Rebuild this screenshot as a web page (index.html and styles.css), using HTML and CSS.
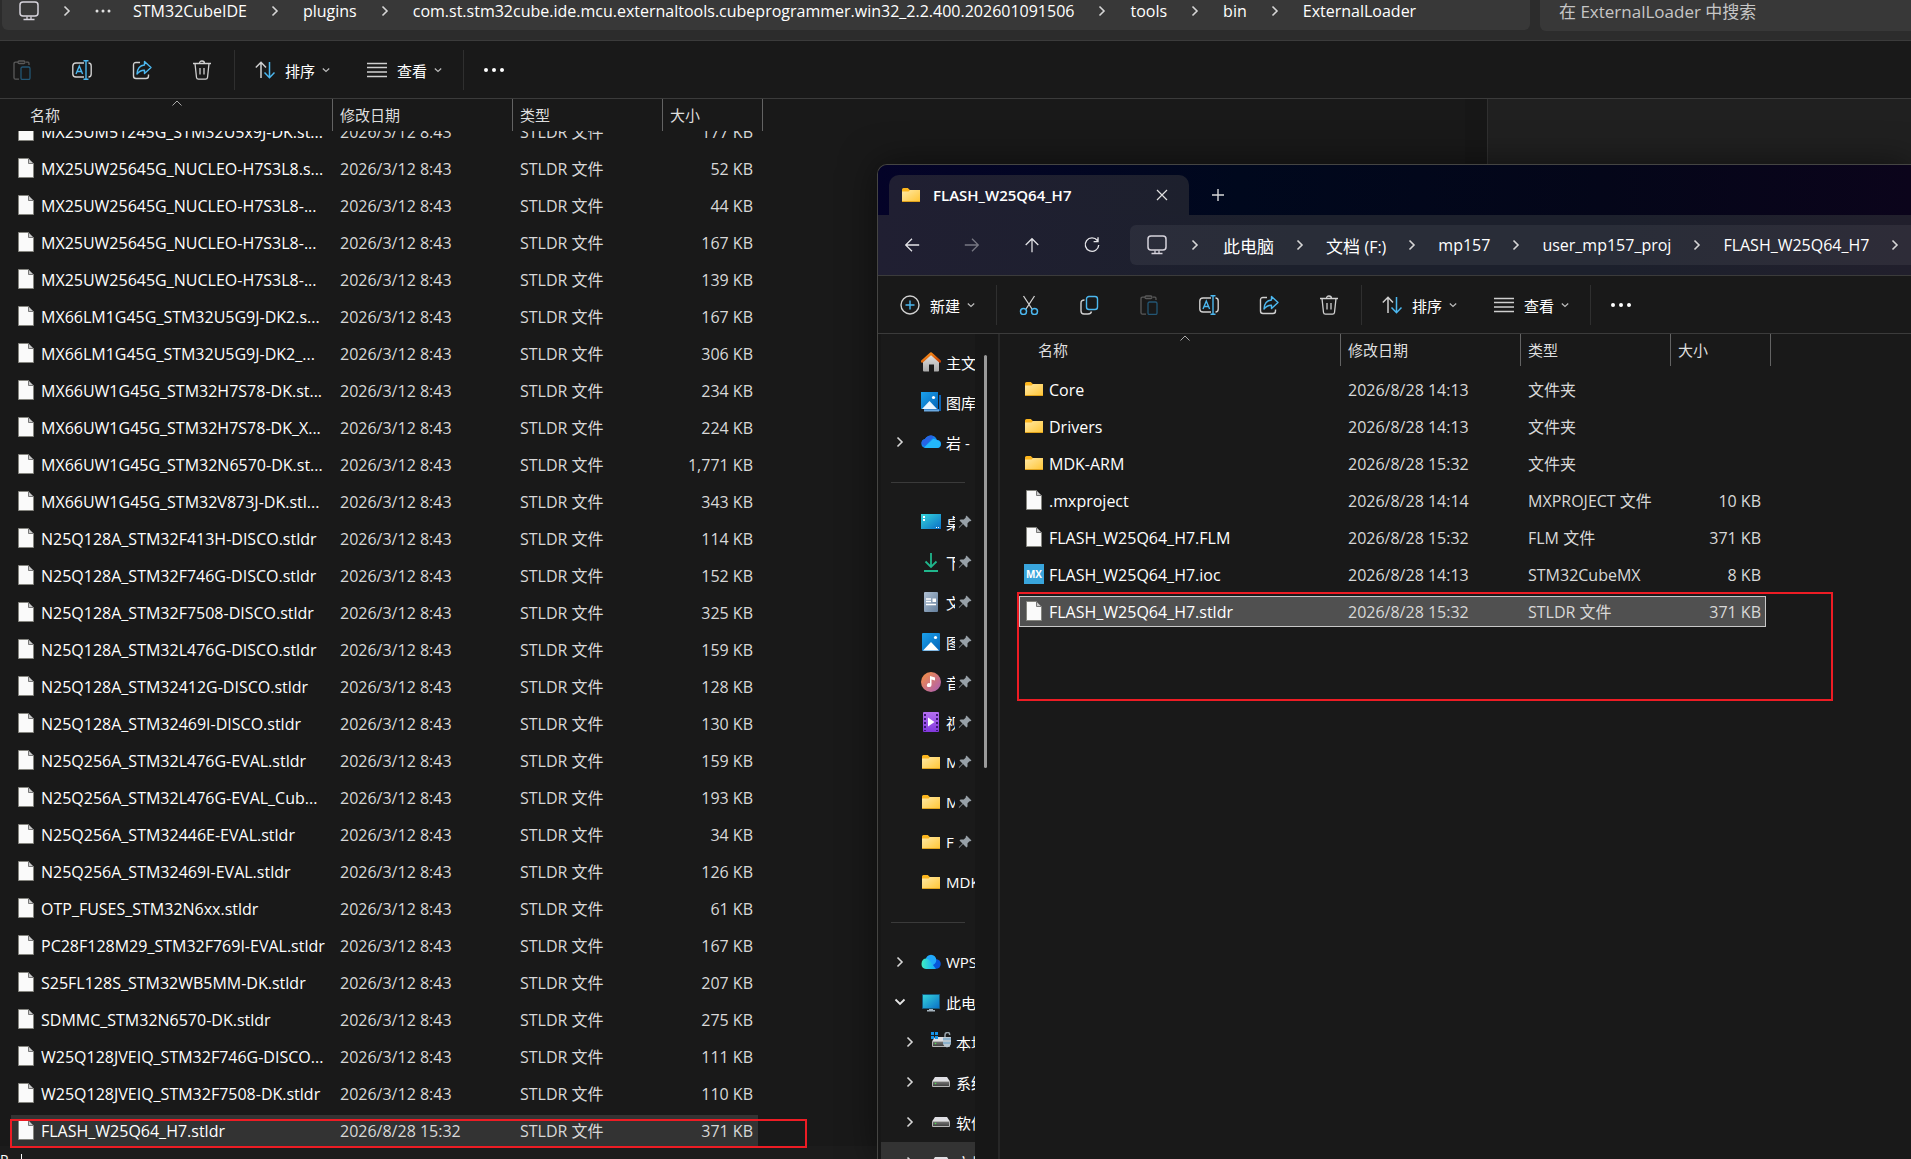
FILE: index.html
```html
<!DOCTYPE html>
<html lang="zh-CN">
<head>
    <meta charset="UTF-8">
    <meta name="viewport" content="width=device-width, initial-scale=1.0">
    <title>ExternalLoader</title>
    <link rel="stylesheet" href="styles.css">
</head>
<body>

<!-- Icon set -->
<svg class="sprite" aria-hidden="true">
    <defs>
        <linearGradient id="gFolder" x1="0" y1="0" x2="1" y2="1"><stop offset="0" stop-color="#ffe9a6"/><stop offset="1" stop-color="#ffc534"/></linearGradient>
        <linearGradient id="gBlue" x1="0" y1="0" x2="1" y2="1"><stop offset="0" stop-color="#1ba0ea"/><stop offset="1" stop-color="#0564b8"/></linearGradient>
        <linearGradient id="gTeal" x1="0" y1="0" x2="1" y2="1"><stop offset="0" stop-color="#36d6dc"/><stop offset="1" stop-color="#0a6ec6"/></linearGradient>
        <linearGradient id="gHouse" x1="0" y1="0" x2="0" y2="1"><stop offset="0" stop-color="#e4e4e4"/><stop offset="1" stop-color="#a9a9a9"/></linearGradient>
        <linearGradient id="gRoof" x1="0" y1="0" x2="1" y2="1"><stop offset="0" stop-color="#ff9a1f"/><stop offset="1" stop-color="#c63e00"/></linearGradient>
        <linearGradient id="gDoc" x1="0" y1="0" x2="1" y2="1"><stop offset="0" stop-color="#aebfd2"/><stop offset="1" stop-color="#637e9c"/></linearGradient>
        <linearGradient id="gMusic" x1="0" y1="0" x2="1" y2="1"><stop offset="0" stop-color="#f9923d"/><stop offset="1" stop-color="#a85bb9"/></linearGradient>
        <linearGradient id="gVideo" x1="0" y1="0" x2="0" y2="1"><stop offset="0" stop-color="#b56ff0"/><stop offset="1" stop-color="#8238dd"/></linearGradient>
        <linearGradient id="gWps" x1="0" y1="0" x2="1" y2="0"><stop offset="0" stop-color="#3ff0c0"/><stop offset="1" stop-color="#12a4ff"/></linearGradient>
        <linearGradient id="gDrive" x1="0" y1="0" x2="0" y2="1"><stop offset="0" stop-color="#777"/><stop offset="1" stop-color="#3b3b3b"/></linearGradient>
    </defs>
    <symbol id="file" viewBox="0 0 20 20"><path d="M2.500.5h10l5 5v14h-15z" fill="#fafafa" stroke="#85857f"/><path d="M12.500.5v5h5z" fill="#c9c9c9" stroke="#777"/></symbol>
    <symbol id="folder" viewBox="0 0 20 20"><path d="M1 4.500q0-1.500 1.500-1.500h4.300l2 2H19v4H1z" fill="#fcb51c"/><path d="M1 6.500h6.500L9 5h10v12H1z" fill="url(#gFolder)"/><path d="M1 16.500h18" stroke="#e0a21c"/></symbol>
    <symbol id="mx" viewBox="0 0 20 20"><path d="M0 0h20v20H0z" fill="#39a5dc"/><text x="10" y="14" text-anchor="middle" class="mx-text">MX</text></symbol>
    <symbol id="home" viewBox="0 0 20 20"><path d="M2 9l8-7 8 7v9.500q0 1-1 1h-4v-7H8v7H3q-1 0-1-1z" fill="url(#gHouse)"/><path d="M1 9.500L10 1.500l9 8" fill="none" stroke="url(#gRoof)" stroke-width="2.400" stroke-linecap="round" stroke-linejoin="round"/></symbol>
    <symbol id="gallery" viewBox="0 0 20 20"><path d="M3 17h15V3h2v16H3z" fill="#0f63b4"/><path d="M3 17.500h15v2H3z" fill="#6aa9e0"/><path d="M0 0h17v17H0z" fill="url(#gBlue)"/><path d="M1 17l7.500-8 7.500 8z" fill="#e9f5ff"/><circle cx="12.500" cy="5.500" r="1.600" fill="#fff"/></symbol>
    <symbol id="picture" viewBox="0 0 20 20"><rect x="1" y="1" width="18" height="18" rx="1" fill="url(#gBlue)"/><path d="M2 18.500l8-8.500 8 8.500z" fill="#fff"/><circle cx="14.500" cy="5.500" r="1.600" fill="#fff"/></symbol>
    <symbol id="onedrive" viewBox="0 0 20 20"><path d="M4.500 16A4.500 4.500 0 0 1 4 7.100 6.500 6.500 0 0 1 16 8a4 4 0 0 1 0 8z" fill="#1482ee"/><path d="M3 15.500L12 7a6 6 0 0 1 4 1q4 1 3.800 4.500Q19 16 16 16H5z" fill="#23b8fb"/><path d="M4 7.100A6.500 6.500 0 0 1 13 4.500L4 14q-3-1-3.500-3 .5-3 3.500-3.900z" fill="#2763e4"/></symbol>
    <symbol id="wps" viewBox="0 0 20 20"><circle cx="15" cy="12" r="4.800" fill="#0754da"/><circle cx="10" cy="8" r="5.300" fill="#21a9fb"/><path d="M4.500 6.500q3 0 5 3 2 3 5.500 7.500H5q-4.500-.5-4.500-5 .3-5 4-5.500z" fill="url(#gWps)"/></symbol>
    <symbol id="desktop" viewBox="0 0 20 20"><path d="M0 2h20v15H0z" fill="url(#gTeal)"/><path d="M2 4h2v2H2zM2 7h2v2H2z" fill="#fff"/><path d="M15 15.500h3" stroke="#fff" stroke-dasharray="1 1"/></symbol>
    <symbol id="download" viewBox="0 0 20 20"><path d="M10 1v14M4.500 9.500L10 15l5.500-5.500M3 19h14" fill="none" stroke="#20b68c" stroke-width="1.800"/></symbol>
    <symbol id="document" viewBox="0 0 20 20"><rect x="3" y="0" width="14" height="20" rx="1" fill="url(#gDoc)"/><path d="M5 7h5M5 9.500h5M5 12.500h10" stroke="#fff" stroke-width="1.300"/><path d="M11.500 6.500h3.500V10h-3.500z" fill="#fff"/></symbol>
    <symbol id="music" viewBox="0 0 20 20"><circle cx="10" cy="10" r="10" fill="url(#gMusic)"/><path d="M9 4l5 1.500v3L10.500 7.500V13a2.300 2 0 1 1-1.500-1.800z" fill="#fff"/></symbol>
    <symbol id="video" viewBox="0 0 20 20"><rect x="2" y="0" width="16" height="20" rx="1" fill="url(#gVideo)"/><path d="M4 2v17M16 2v17" stroke="#3d1576" stroke-width="2" stroke-dasharray="2 2"/><path d="M7 5.500l6.500 4.500L7 14.500z" fill="#fff"/></symbol>
    <symbol id="pc" viewBox="0 0 20 20"><path d="M1.500 2.500h17v14h-17z" fill="url(#gTeal)" stroke="#15587c"/><path d="M8 17h4v1h2v1.500H6V18h2z" fill="#a6b4be"/></symbol>
    <symbol id="drive" viewBox="0 0 20 20"><path d="M4 5h12l3 4.500H1z" fill="#dfdfe3"/><path d="M1.500 9.500h17v5h-17z" fill="url(#gDrive)" stroke="#b5b5b5"/><circle cx="4.500" cy="11.500" r=".8" fill="#4be04b"/></symbol>
    <symbol id="osdrive" viewBox="0 0 20 20"><path d="M4 5h12l3 4.500H1z" fill="#dfdfe3"/><path d="M1.500 9.500h17v5h-17z" fill="url(#gDrive)" stroke="#b5b5b5"/><circle cx="4.500" cy="11.500" r=".8" fill="#4be04b"/><path d="M0 0h3v3H0zM4 0h3v3H4zM0 4h3v3H0zM4 4h3v3H4z" fill="#1594e8"/><path d="M14 5V3q0-2.500 2.500-2.500t2 2.500" fill="none" stroke="#98a3aa" stroke-width="1.500"/><path d="M12 5h8v7q-1 3-4 3.500-3-.5-4-3.500z" fill="#b9c7d1"/><path d="M12 7h8M12 11h8" stroke="#5e9cc7"/></symbol>
    <symbol id="pin" viewBox="0 0 14 14"><path d="M8.500.5l5 5-1.200.8-.8-.1-2 2v3.300l-1 1L5 9 .8 13.200 1 12l3.500-3.500L1.500 5.500l1-1h3.300l2-2-.1-.8z" fill="#98a1a8"/></symbol>
    <symbol id="monitor" viewBox="0 0 20 20"><rect x="1" y="1" width="18" height="14" rx="3" fill="none" stroke="#d6d3dc" stroke-width="1.500"/><path d="M8 15.500v3M12 15.500v3M4.500 18.500h11" stroke="#d6d3dc" stroke-width="1.300"/></symbol>
    <symbol id="right" viewBox="0 0 10 12"><path d="M2.500 1.500L7 6l-4.500 4.500" fill="none" stroke="#d6d6d6" stroke-width="1.600"/></symbol>
    <symbol id="down" viewBox="0 0 12 10"><path d="M1.500 2.500L6 7l4.500-4.500" fill="none" stroke="#e6e6e6" stroke-width="1.800"/></symbol>
    <symbol id="caret" viewBox="0 0 10 10"><path d="M1.800 3.500L5 6.500l3.200-3" fill="none" stroke="#bdbdbd" stroke-width="1.200"/></symbol>
    <symbol id="up-mark" viewBox="0 0 10 6"><path d="M.5 5.500L5 1l4.500 4.500" fill="none" stroke="#aaa"/></symbol>
    <symbol id="dots" viewBox="0 0 20 20"><path d="M2 10h.01M10 10h.01M18 10h.01" stroke="#fff" stroke-width="4" stroke-linecap="round"/></symbol>
    <symbol id="dots-small" viewBox="0 0 16 16"><path d="M2 8h.01M8 8h.01M14 8h.01" stroke="#e0e0e0" stroke-width="3" stroke-linecap="round"/></symbol>
    <symbol id="paste" viewBox="0 0 20 20"><g fill="none" stroke-width="1.300"><path d="M6 2.200H3.500q-1.500 0-1.500 1.500v14q0 1.500 1.500 1.500H7M14 2.200h2q1 0 1 1.500V5" stroke="#5a5a5a"/><rect x="6" y="1" width="7" height="2.500" rx="1.200" stroke="#5a5a5a"/><rect x="9" y="7" width="9" height="12.500" rx="1.500" stroke="#235674"/></g></symbol>
    <symbol id="rename" viewBox="0 0 20 20"><g fill="none" stroke-width="1.400"><path d="M12 3H4Q.8 3 .8 6v8Q.8 17 4 17h8M16.500 3q2.700 0 2.700 3v8q0 3-2.700 3" stroke="#d0d0d0"/><path d="M4 14L7.300 6l3.300 8M5.200 11.500h4.200M14 .7v18.600M11.500.7h5M11.500 19.300h5" stroke="#4cb8f0"/></g></symbol>
    <symbol id="share" viewBox="0 0 20 20"><g fill="none" stroke-width="1.400" stroke-linejoin="round"><path d="M8 2.500H4Q1.500 2.500 1.500 5v11Q1.500 18.500 4 18.500h10q2.500 0 2.500-2.500v-1.500" stroke="#d0d0d0"/><path d="M12.500 1.500L19 7.500l-6.500 6v-3.300Q8 10 5 14q.5-8.500 7.500-9z" stroke="#4cb8f0"/></g></symbol>
    <symbol id="trash" viewBox="0 0 20 20"><path d="M1 3.500h18M7.500 3.500q0-2.500 2.500-2.500t2.500 2.500M3 3.500l1.500 14q.2 1.700 2 1.700h7q1.800 0 2-1.700L17 3.500M8 8v6.500M12 8v6.500" fill="none" stroke="#d0d0d0" stroke-width="1.300"/></symbol>
    <symbol id="cut" viewBox="0 0 20 20"><path d="M4.500 1L13 14M15.500 1L7 14" fill="none" stroke="#d0d0d0" stroke-width="1.300"/><g fill="none" stroke="#4cb8f0" stroke-width="1.500"><circle cx="4.500" cy="16.500" r="3"/><circle cx="15.500" cy="16.500" r="3"/></g></symbol>
    <symbol id="copy" viewBox="0 0 20 20"><g fill="none" stroke-width="1.400"><path d="M5.500 5Q2 5 2 8v8q0 3 3 3h4q3 0 3.500-2.500" stroke="#d0d0d0"/><rect x="7.500" y="1.500" width="11" height="13" rx="2.500" stroke="#4cb8f0"/></g></symbol>
    <symbol id="sort" viewBox="0 0 20 20"><g fill="none" stroke-width="1.500"><path d="M6 18V2.500M.8 7.500L6 2.300l5 5.200" stroke="#d0d0d0"/><path d="M14.500 2v15.500M9.500 12.500l5 5.200 5-5.200" stroke="#4cb8f0"/></g></symbol>
    <symbol id="view" viewBox="0 0 20 20"><path d="M0 3.500h20M0 7.500h20M0 12h20M0 16.500h20" stroke="#cfcfcf" stroke-width="1.300"/></symbol>
    <symbol id="new" viewBox="0 0 20 20"><circle cx="10" cy="10" r="9" fill="none" stroke="#d0d0d0" stroke-width="1.400"/><path d="M10 5.500v9M5.500 10h9" stroke="#4cb8f0" stroke-width="1.400"/></symbol>
    <symbol id="arrow" viewBox="0 0 20 20"><path d="M18 10H3M10 3l-7 7 7 7" fill="none" stroke="#e4e4e8" stroke-width="1.400"/></symbol>
    <symbol id="refresh" viewBox="0 0 20 20"><path d="M16 5a7.500 7.500 0 1 0 1.500 5M16.700 1.500v4.800h-4.900" fill="none" stroke="#e4e4e8" stroke-width="1.500"/></symbol>
    <symbol id="close" viewBox="0 0 12 12"><path d="M1 1l10 10M11 1L1 11" stroke="#e0e0e0" stroke-width="1.200"/></symbol>
    <symbol id="plus" viewBox="0 0 12 12"><path d="M6 0v12M0 6h12" stroke="#d8d8d8" stroke-width="1.400"/></symbol>
</svg>

<!-- Back window: ExternalLoader -->
<main class="window back">
    <div class="nav">
        <nav class="address">
            <svg class="i20"><use href="#monitor"/></svg>
            <svg class="sep"><use href="#right"/></svg>
            <svg class="i16"><use href="#dots-small"/></svg>
            <a href="#" class="after-dots">STM32CubeIDE</a>
            <svg class="sep"><use href="#right"/></svg>
            <a href="#">plugins</a>
            <svg class="sep"><use href="#right"/></svg>
            <a href="#">com.st.stm32cube.ide.mcu.externaltools.cubeprogrammer.win32_2.2.400.202601091506</a>
            <svg class="sep"><use href="#right"/></svg>
            <a href="#">tools</a>
            <svg class="sep"><use href="#right"/></svg>
            <a href="#">bin</a>
            <svg class="sep"><use href="#right"/></svg>
            <a href="#">ExternalLoader</a>
        </nav>
        <input class="search" type="text" aria-label="搜索" placeholder="在 ExternalLoader 中搜索">
    </div>
    <div class="toolbar">
        <div class="tools">
            <button aria-label="粘贴"><svg class="i20"><use href="#paste"/></svg></button>
            <button aria-label="重命名"><svg class="i20"><use href="#rename"/></svg></button>
            <button aria-label="共享"><svg class="i20"><use href="#share"/></svg></button>
            <button aria-label="删除"><svg class="i20"><use href="#trash"/></svg></button>
        </div>
        <div class="menus">
            <button><svg class="i20"><use href="#sort"/></svg>排序<svg class="i10"><use href="#caret"/></svg></button>
            <button><svg class="i20"><use href="#view"/></svg>查看<svg class="i10"><use href="#caret"/></svg></button>
        </div>
        <div class="menus">
            <button aria-label="更多"><svg class="i20"><use href="#dots"/></svg></button>
        </div>
    </div>
    <div class="content">
        <section class="list">
            <div class="heads">
                <button class="c-name">名称<svg class="mark"><use href="#up-mark"/></svg></button>
                <button class="c-date">修改日期</button>
                <button class="c-type">类型</button>
                <button class="c-size">大小</button>
            </div>
            <div class="rows">
                <table><tbody id="loaderFiles"></tbody></table>
            </div>
        </section>
        <div class="gutter"></div>
        <aside class="preview"></aside>
    </div>
    <div class="status"><span>P</span><i></i></div>
    <div class="marker marker-back"></div>
</main>

<!-- Front window: FLASH_W25Q64_H7 -->
<div class="window front">
    <div class="tabs">
        <div class="tab">
            <svg class="i20"><use href="#folder"/></svg>
            <span>FLASH_W25Q64_H7</span>
            <button aria-label="关闭"><svg class="i12"><use href="#close"/></svg></button>
        </div>
        <button class="add" aria-label="新标签页"><svg class="i12"><use href="#plus"/></svg></button>
    </div>
    <div class="nav">
        <div class="tools">
            <button aria-label="后退"><svg class="i18"><use href="#arrow"/></svg></button>
            <button aria-label="前进" class="forward"><svg class="i18"><use href="#arrow"/></svg></button>
            <button aria-label="向上" class="up"><svg class="i18"><use href="#arrow"/></svg></button>
            <button aria-label="刷新"><svg class="i18"><use href="#refresh"/></svg></button>
        </div>
        <nav class="address">
            <svg class="i20"><use href="#monitor"/></svg>
            <svg class="sep"><use href="#right"/></svg>
            <a href="#" class="cjk">此电脑</a>
            <svg class="sep"><use href="#right"/></svg>
            <a href="#" class="cjk">文档 <small>(F:)</small></a>
            <svg class="sep"><use href="#right"/></svg>
            <a href="#">mp157</a>
            <svg class="sep"><use href="#right"/></svg>
            <a href="#">user_mp157_proj</a>
            <svg class="sep"><use href="#right"/></svg>
            <a href="#">FLASH_W25Q64_H7</a>
            <svg class="sep"><use href="#right"/></svg>
        </nav>
    </div>
    <div class="toolbar">
        <div class="menus">
            <button><svg class="i20"><use href="#new"/></svg>新建<svg class="i10"><use href="#caret"/></svg></button>
        </div>
        <div class="tools">
            <button aria-label="剪切"><svg class="i20"><use href="#cut"/></svg></button>
            <button aria-label="复制"><svg class="i20"><use href="#copy"/></svg></button>
            <button aria-label="粘贴"><svg class="i20"><use href="#paste"/></svg></button>
            <button aria-label="重命名"><svg class="i20"><use href="#rename"/></svg></button>
            <button aria-label="共享"><svg class="i20"><use href="#share"/></svg></button>
            <button aria-label="删除"><svg class="i20"><use href="#trash"/></svg></button>
        </div>
        <div class="menus">
            <button><svg class="i20"><use href="#sort"/></svg>排序<svg class="i10"><use href="#caret"/></svg></button>
            <button><svg class="i20"><use href="#view"/></svg>查看<svg class="i10"><use href="#caret"/></svg></button>
        </div>
        <div class="menus">
            <button aria-label="更多"><svg class="i20"><use href="#dots"/></svg></button>
        </div>
    </div>
    <div class="content">
        <aside class="sidebar">
            <div class="tree" id="tree"></div>
            <div class="scrollbar"></div>
        </aside>
        <section class="list">
            <div class="heads">
                <button class="c-name">名称<svg class="mark"><use href="#up-mark"/></svg></button>
                <button class="c-date">修改日期</button>
                <button class="c-type">类型</button>
                <button class="c-size">大小</button>
            </div>
            <div class="rows">
                <table><tbody id="projectFiles"></tbody></table>
            </div>
        </section>
    </div>
    <div class="marker marker-front"></div>
</div>

<script>
    const loaderFiles = [
        ["MX25UM51245G_STM32U5x9J-DK.st...", "177"],
        ["MX25UW25645G_NUCLEO-H7S3L8.s...", "52"],
        ["MX25UW25645G_NUCLEO-H7S3L8-...", "44"],
        ["MX25UW25645G_NUCLEO-H7S3L8-...", "167"],
        ["MX25UW25645G_NUCLEO-H7S3L8-...", "139"],
        ["MX66LM1G45G_STM32U5G9J-DK2.s...", "167"],
        ["MX66LM1G45G_STM32U5G9J-DK2_...", "306"],
        ["MX66UW1G45G_STM32H7S78-DK.st...", "234"],
        ["MX66UW1G45G_STM32H7S78-DK_X...", "224"],
        ["MX66UW1G45G_STM32N6570-DK.st...", "1,771"],
        ["MX66UW1G45G_STM32V873J-DK.stl...", "343"],
        ["N25Q128A_STM32F413H-DISCO.stldr", "114"],
        ["N25Q128A_STM32F746G-DISCO.stldr", "152"],
        ["N25Q128A_STM32F7508-DISCO.stldr", "325"],
        ["N25Q128A_STM32L476G-DISCO.stldr", "159"],
        ["N25Q128A_STM32412G-DISCO.stldr", "128"],
        ["N25Q128A_STM32469I-DISCO.stldr", "130"],
        ["N25Q256A_STM32L476G-EVAL.stldr", "159"],
        ["N25Q256A_STM32L476G-EVAL_Cub...", "193"],
        ["N25Q256A_STM32446E-EVAL.stldr", "34"],
        ["N25Q256A_STM32469I-EVAL.stldr", "126"],
        ["OTP_FUSES_STM32N6xx.stldr", "61"],
        ["PC28F128M29_STM32F769I-EVAL.stldr", "167"],
        ["S25FL128S_STM32WB5MM-DK.stldr", "207"],
        ["SDMMC_STM32N6570-DK.stldr", "275"],
        ["W25Q128JVEIQ_STM32F746G-DISCO...", "111"],
        ["W25Q128JVEIQ_STM32F7508-DK.stldr", "110"]
    ].map(f => ["file", f[0], "2026/3/12 8:43", "STLDR 文件", f[1] + " KB"]);
    loaderFiles.push(["file", "FLASH_W25Q64_H7.stldr", "2026/8/28 15:32", "STLDR 文件", "371 KB", "hovered"]);

    const projectFiles = [
        ["folder", "Core", "2026/8/28 14:13", "文件夹", ""],
        ["folder", "Drivers", "2026/8/28 14:13", "文件夹", ""],
        ["folder", "MDK-ARM", "2026/8/28 15:32", "文件夹", ""],
        ["file", ".mxproject", "2026/8/28 14:14", "MXPROJECT 文件", "10 KB"],
        ["file", "FLASH_W25Q64_H7.FLM", "2026/8/28 15:32", "FLM 文件", "371 KB"],
        ["mx", "FLASH_W25Q64_H7.ioc", "2026/8/28 14:13", "STM32CubeMX", "8 KB"],
        ["file", "FLASH_W25Q64_H7.stldr", "2026/8/28 15:32", "STLDR 文件", "371 KB", "selected"]
    ];

    // icon, label, extra classes, arrow
    const tree = [
        ["home", "主文", ""],
        ["gallery", "图库", ""],
        ["onedrive", "岩 -", "", "right"],
        null,
        ["desktop", "桌面", "pinned"],
        ["download", "下载", "pinned"],
        ["document", "文档", "pinned"],
        ["picture", "图片", "pinned"],
        ["music", "音乐", "pinned"],
        ["video", "视频", "pinned"],
        ["folder", "MD", "pinned"],
        ["folder", "MD", "pinned"],
        ["folder", "F", "pinned"],
        ["folder", "MDK", ""],
        null,
        ["wps", "WPS", "", "right"],
        ["pc", "此电脑", "", "down"],
        ["osdrive", "本地", "child", "right"],
        ["drive", "系统", "child", "right"],
        ["drive", "软件", "child", "right"],
        ["drive", "文档", "child current", "right"]
    ];

    function fillTable(id, files) {
        document.getElementById(id).innerHTML = files.map(f => `
            <tr class="${f[5] || ""}">
                <td class="c-name"><div><svg class="i20"><use href="#${f[0]}"/></svg>${f[1]}</div></td>
                <td class="c-date">${f[2]}</td>
                <td class="c-type">${f[3]}</td>
                <td class="c-size">${f[4]}</td>
            </tr>`).join("");
    }

    function fillTree() {
        document.getElementById("tree").innerHTML = tree.map(t => t ? `
            <a href="#" class="node ${t[2]}">
                <span class="arrow">${t[3] ? `<svg class="i12"><use href="#${t[3]}"/></svg>` : ""}</span>
                <svg class="i20"><use href="#${t[0]}"/></svg>
                <span class="label">${t[1]}</span>
                ${t[2] === "pinned" ? `<svg class="i14"><use href="#pin"/></svg>` : ""}
            </a>` : `<hr>`).join("");
    }

    fillTable("loaderFiles", loaderFiles);
    fillTable("projectFiles", projectFiles);
    fillTree();
</script>
</body>
</html>
```
FILE: styles.css
```css
* {
    box-sizing: border-box;
}
body {
    margin: 0;
    height: 100vh;
    overflow: hidden;
    position: relative;
    background-color: #191919;
    color: #fff;
    font-family: "Open Sans", "Noto Sans CJK SC", sans-serif;
    font-size: 15px;
}
button {
    padding: 0;
    border: none;
    background: none;
    color: inherit;
    font: inherit;
}
a {
    color: inherit;
    text-decoration: none;
}
svg {
    display: block;
    flex: none;
}
.sprite {
    position: absolute;
    width: 0;
    height: 0;
}
.i20 { width: 20px; height: 20px; }
.i18 { width: 18px; height: 18px; }
.i16 { width: 16px; height: 16px; }
.i14 { width: 14px; height: 14px; }
.i12 { width: 12px; height: 12px; }
.i10 { width: 10px; height: 10px; }
.mx-text {
    font-size: 10px;
    font-weight: 700;
    fill: #fff;
}

/* Windows */
.window {
    display: flex;
    flex-direction: column;
    overflow: hidden;
    background-color: #191919;
}
.back {
    height: 100%;
}
.front {
    position: absolute;
    top: 164px;
    left: 877px;
    right: 0;
    bottom: 0;
    border: 1px solid #454543;
    border-right: none;
    border-bottom: none;
    border-radius: 10px 0 0 0;
    box-shadow: 0 0 36px rgba(0, 0, 0, 0.5);
}

/* Title bar */
.tabs {
    display: flex;
    align-items: flex-end;
    height: 50px;
    padding-left: 11px;
    background: linear-gradient(90deg, #040328, #00081d 35%, #040619 70%, #0b041b);
}
.tab {
    display: flex;
    align-items: center;
    width: 300px;
    height: 40px;
    padding: 0 21px 0 12px;
    border-radius: 10px 10px 0 0;
    background: linear-gradient(90deg, #201f32, #1d202d);
    font-size: 15px;
    font-weight: 600;
}
.tab span {
    flex: 1;
    padding-left: 12px;
}
.add {
    height: 40px;
    padding: 0 23px;
}

/* Navigation and address */
.nav {
    display: flex;
    flex: none;
    border-bottom: 1px solid #3b3b3b;
    background-color: #2c2c2c;
}
.back .nav {
    height: 41px;
    padding-left: 2px;
    gap: 10px;
    align-items: flex-start;
}
.front .nav {
    height: 61px;
    padding: 10px 0 10px 4px;
    background: linear-gradient(90deg, #201f32, #1c202c 40%, #1c202c 70%, #211f2c);
}
.front .nav .tools {
    width: 248px;
}
.forward {
    opacity: 0.45;
}
.forward svg {
    transform: rotate(180deg);
}
.up svg {
    transform: rotate(90deg);
}
.address {
    display: flex;
    flex: 1;
    align-items: center;
    min-width: 0;
    overflow: hidden;
    height: 40px;
    padding-left: 17px;
    border-radius: 6px 0 0 6px;
    background-color: rgba(255, 255, 255, 0.06);
    font-size: 16px;
    white-space: nowrap;
}
.back .address {
    height: 30px;
    padding-bottom: 9px;
    border-radius: 0 0 6px 6px;
    background-color: #383838;
}
.sep {
    width: 10px;
    height: 12px;
    margin: 0 21px;
}
.back .sep {
    margin: 0 23px;
}
.address .i20 + .sep {
    margin: 0 23px;
}
.after-dots {
    margin-left: 22px;
}
.cjk {
    font-size: 17px;
}
.cjk small {
    font-size: 16px;
}
.search {
    width: 371px;
    height: 31px;
    padding: 0 0 9px 19px;
    border: none;
    border-radius: 0 0 0 6px;
    background-color: #383838;
    color: #fff;
    font: inherit;
    font-size: 17px;
}
.search::placeholder {
    color: #c6c6c6;
}

/* Toolbar */
.toolbar {
    display: flex;
    flex: none;
    align-items: center;
    height: 58px;
    padding-top: 1px;
    border-bottom: 1px solid #3b3b3b;
}
.back .toolbar {
    padding-left: 235px;
}
.back .toolbar .tools {
    margin-left: -243px;
}
.tools,
.menus {
    display: flex;
    align-items: center;
    height: 40px;
}
.tools button {
    display: flex;
    align-items: center;
    justify-content: center;
    width: 60px;
    height: 40px;
}
.toolbar .tools {
    padding-right: 2px;
    border-right: 1px solid #2f2f2f;
}
.front .toolbar {
    padding-left: 2px;
}
.front .toolbar .tools {
    padding-left: 2px;
}
.menus {
    gap: 36px;
    padding: 0 20px;
    border-right: 1px solid #2f2f2f;
}
.menus:last-child {
    border-right: none;
}
.menus button {
    display: flex;
    align-items: center;
}
.menus .i20:not(:last-child) {
    margin-right: 10px;
}
.menus .i10 {
    margin-left: 6px;
}

/* File list */
.content {
    display: flex;
    flex: 1;
    min-height: 0;
}
.list {
    flex: 1;
    display: flex;
    flex-direction: column;
    min-width: 0;
}
.back .list {
    padding-left: 11px;
}
.front .list {
    padding-left: 19px;
}
.heads {
    display: flex;
    flex: none;
    height: 32px;
    color: #dedede;
}
.heads button {
    position: relative;
    padding: 0 0 2px 7px;
    border-right: 1px solid #636363;
    text-align: left;
}
.heads .c-name {
    padding-left: 19px;
}
.mark {
    position: absolute;
    top: 1px;
    left: 161px;
    width: 10px;
    height: 6px;
}
.c-name { width: 322px; }
.c-date { width: 180px; }
.c-type { width: 150px; }
.c-size { width: 95px; }
.heads .c-size {
    width: 100px;
}
.rows {
    flex: 1;
    min-height: 0;
    overflow: hidden;
}
.front .rows {
    padding-top: 6px;
}
.back table {
    margin-top: -17px;
}
table {
    width: 747px;
    table-layout: fixed;
    border-collapse: collapse;
    isolation: isolate;
    white-space: nowrap;
}
tr {
    position: relative;
    height: 37px;
}
td {
    padding: 0 0 2px 7px;
    color: #d8d8d8;
    font-size: 16px;
    line-height: 24px;
}
td.c-name {
    padding-left: 5px;
    color: #fff;
}
td.c-name div {
    display: flex;
    align-items: center;
    gap: 5px;
}
td.c-name svg {
    margin-bottom: 1px;
}
td.c-size {
    padding-right: 5px;
    text-align: right;
}
.hovered::after,
.selected::after {
    content: "";
    position: absolute;
    inset: 2px 0 4px 0;
    z-index: -1;
    background-color: #333;
}
.selected::after {
    background-color: #505050;
    border: 1px solid #c8c8c8;
}
.gutter {
    width: 22px;
    background-color: #171717;
}
.preview {
    width: 424px;
    border-left: 1px solid #303030;
    background-color: #202020;
}
.status {
    display: flex;
    flex: none;
    height: 13px;
    padding-top: 8px;
    gap: 13px;
    overflow: hidden;
    background-color: #1c1c1c;
    font-size: 14px;
    line-height: 12px;
}
.status i {
    width: 1px;
    height: 12px;
    background-color: #fff;
}

/* Navigation tree */
.sidebar {
    display: flex;
    flex: none;
    width: 122px;
    padding-left: 3px;
    border-right: 2px solid #272727;
    background-color: #171717;
}
.tree {
    width: 94px;
    padding-top: 8px;
    overflow: hidden;
    background-color: #1a1a1a;
}
.tree hr {
    width: 74px;
    height: 1px;
    margin: 20px 0 19px 10px;
    border: none;
    background-color: #3a3a3a;
}
.node {
    display: flex;
    align-items: center;
    height: 40px;
    overflow: hidden;
    padding-left: 13px;
    white-space: nowrap;
}
.arrow {
    width: 27px;
    flex: none;
}
.label {
    margin-left: 5px;
}
.pinned .label {
    width: 9px;
    margin-right: 3px;
    overflow: hidden;
}
.child {
    padding-left: 23px;
}
.current {
    background-color: #333;
}
.scrollbar {
    width: 3px;
    height: 413px;
    margin: 21px 0 0 9px;
    border-radius: 2px;
    background-color: #9a9a9a;
}

/* Red highlight frames */
.marker {
    position: absolute;
    border: 2px solid #ed1c24;
    pointer-events: none;
}
.marker-back {
    left: 10px;
    bottom: 11px;
    width: 797px;
    height: 29px;
}
.marker-front {
    top: 427px;
    left: 139px;
    width: 816px;
    height: 109px;
}
```
